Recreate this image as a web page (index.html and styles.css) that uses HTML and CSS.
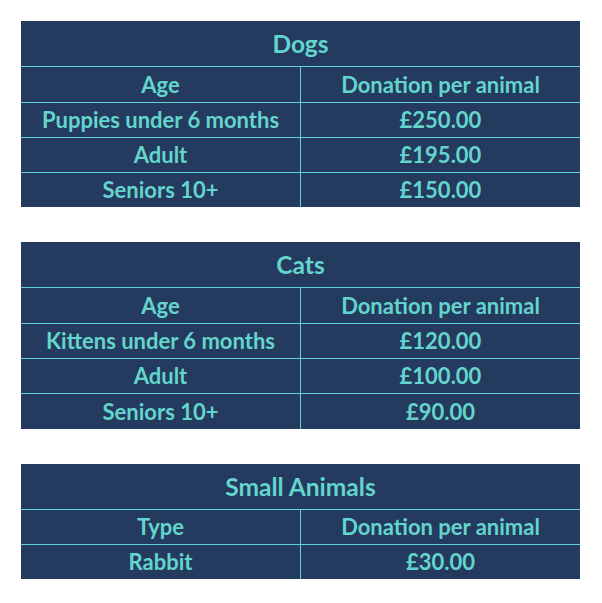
FILE: index.html
```html
<!DOCTYPE html>
<html lang="en">
<head>
<meta charset="utf-8">
<title>Donations</title>
<link rel="stylesheet" href="styles.css">
</head>
<body>
<div class="page">
  <table class="price">
    <tr><th class="title" colspan="2">Dogs</th></tr>
    <tr class="head"><td>Age</td><td>Donation per animal</td></tr>
    <tr><td>Puppies under 6 months</td><td>£250.00</td></tr>
    <tr><td>Adult</td><td>£195.00</td></tr>
    <tr><td>Seniors 10+</td><td>£150.00</td></tr>
  </table>
  <table class="price">
    <tr><th class="title" colspan="2">Cats</th></tr>
    <tr class="head"><td>Age</td><td>Donation per animal</td></tr>
    <tr><td>Kittens under 6 months</td><td>£120.00</td></tr>
    <tr><td>Adult</td><td>£100.00</td></tr>
    <tr class="head"><td>Seniors 10+</td><td>£90.00</td></tr>
  </table>
  <table class="price">
    <tr><th class="title" colspan="2">Small Animals</th></tr>
    <tr><td>Type</td><td>Donation per animal</td></tr>
    <tr><td>Rabbit</td><td>£30.00</td></tr>
  </table>
</div>
</body>
</html>
```
FILE: styles.css
```css
html, body {
  margin: 0;
  padding: 0;
  background: #ffffff;
}
.page {
  padding: 21px 0 0 21px;
  display: flex;
  flex-direction: column;
  gap: 35px;
}
.price {
  width: 559px;
  border-collapse: collapse;
  background: #243a5e;
  table-layout: fixed;
  font-family: Lato, "Liberation Sans", sans-serif;
  font-weight: 700;
  color: #63d5cc;
}
.price td, .price th {
  padding: 0;
  text-align: center;
  vertical-align: middle;
  line-height: 1;
}
.price .title {
  height: 44px;
  font-size: 24.5px;
  font-weight: 700;
  padding-top: 1px;
}
.price td {
  height: 34px;
  font-size: 22px;
  border-top: 1px solid #5fd4d2;
}
.price .head td {
  height: 35px;
}
.price td:first-child {
  width: 279px;
  border-right: 1px solid #5fd4d2;
}
```
